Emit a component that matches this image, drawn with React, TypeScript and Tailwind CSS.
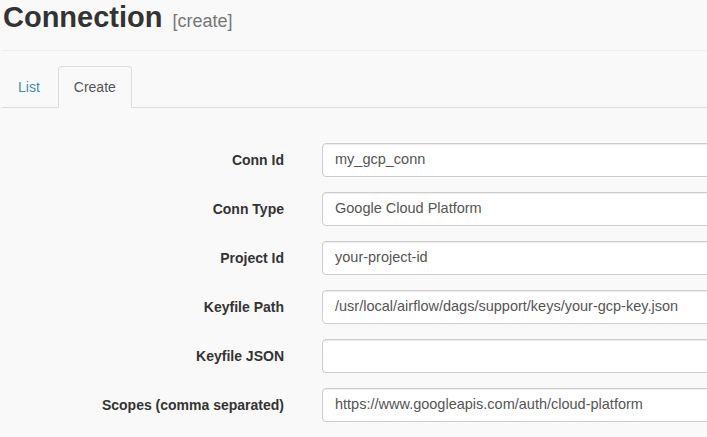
import React from "react";

const rows: { label: string; value: string }[] = [
  { label: "Conn Id", value: "my_gcp_conn" },
  { label: "Conn Type", value: "Google Cloud Platform" },
  { label: "Project Id", value: "your-project-id" },
  { label: "Keyfile Path", value: "/usr/local/airflow/dags/support/keys/your-gcp-key.json" },
  { label: "Keyfile JSON", value: "" },
  { label: "Scopes (comma separated)", value: "https://www.googleapis.com/auth/cloud-platform" },
];

export default function App() {
  return (
    <div
      className="w-[707px] h-[437px] overflow-hidden bg-[#f9f9f9] text-[#333]"
      style={{ fontFamily: '"Liberation Sans", Arial, sans-serif' }}
    >
      <div className="flex items-baseline pl-[3px] mt-[3px] h-[36px]">
        <h1 className="text-[29px] font-bold leading-none text-[#333]">Connection</h1>
        <span className="ml-[10px] text-[18px] leading-none text-[#777]">[create]</span>
      </div>
      <div className="ml-[2px] mt-[11px] h-px bg-[#eeeeee]" />
      <div className="ml-[2px] mt-[15px] flex border-b border-[#dddddd] h-[42px]">
        <div className="mr-[2px] px-[15px] py-[10px] border border-transparent text-[14px] leading-[20px] text-[#3b8fb3]">
          List
        </div>
        <div className="px-[15px] py-[10px] border border-[#dddddd] border-b-[#f9f9f9] rounded-t-[4px] bg-[#f9f9f9] text-[14px] leading-[20px] text-[#555] h-[42px]">
          Create
        </div>
      </div>
      <div className="mt-[35px] flex flex-col gap-[15px]">
        {rows.map((r) => (
          <div key={r.label} className="flex items-center">
            <div className="w-[284px] shrink-0 text-right text-[14px] font-bold text-[#333]">{r.label}</div>
            <div className="ml-[38px] w-[440px] shrink-0 h-[34px] bg-white border border-[#cccccc] rounded-[4px] shadow-[inset_0_1px_1px_rgba(0,0,0,0.075)] flex items-center pl-[12px] text-[14.5px] text-[#555] whitespace-nowrap overflow-hidden">
              {r.value}
            </div>
          </div>
        ))}
      </div>
    </div>
  );
}
